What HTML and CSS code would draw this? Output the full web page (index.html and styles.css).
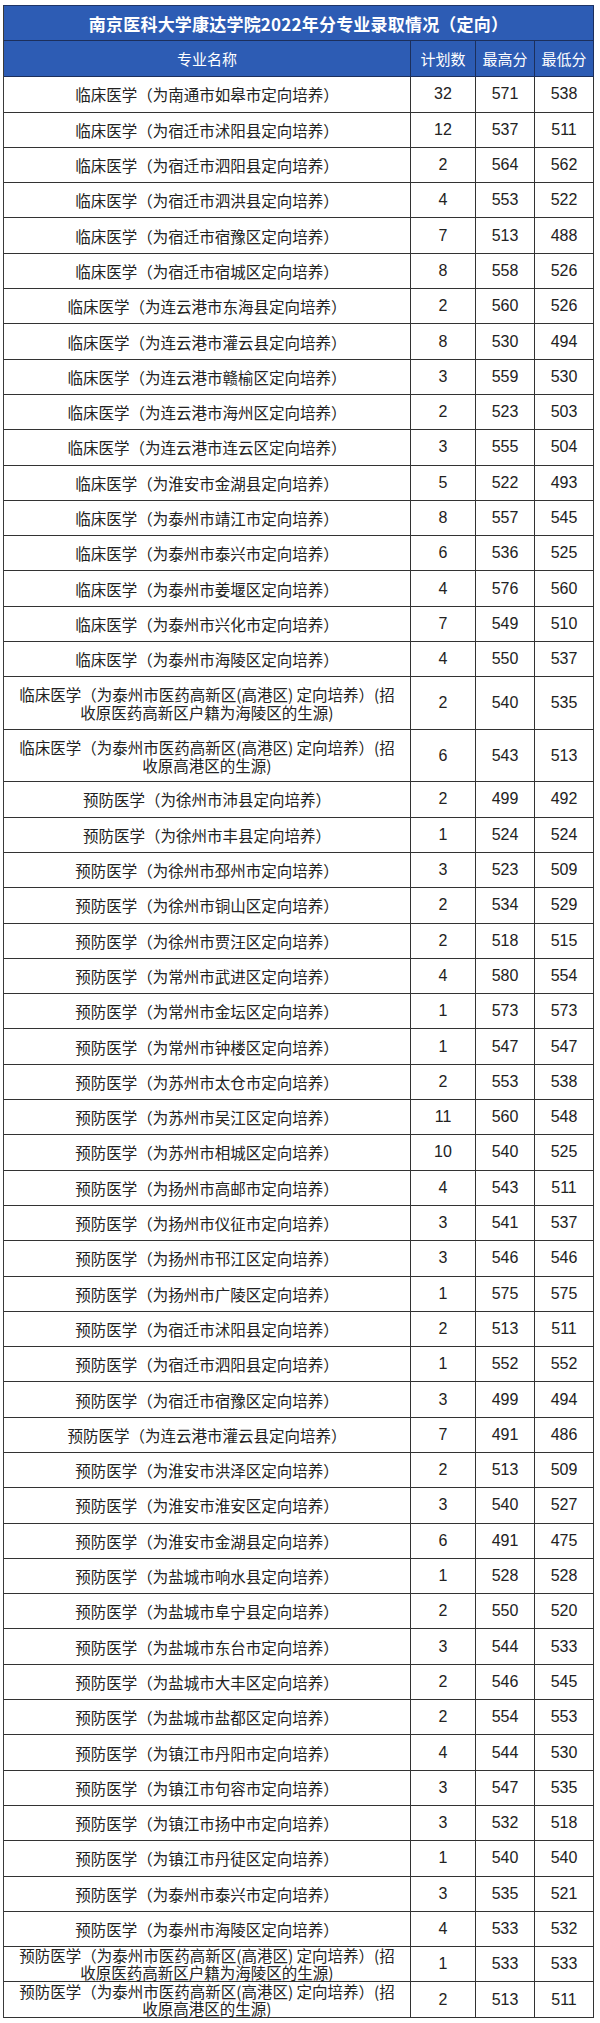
FILE: index.html
```html
<!DOCTYPE html>
<html lang="zh-CN">
<head>
<meta charset="utf-8">
<title>南京医科大学康达学院2022年分专业录取情况（定向）</title>
<link rel="stylesheet" href="styles.css">
</head>
<body>
<div class="sheet">
  <div class="title">南京医科大学康达学院2022年分专业录取情况（定向）</div>
  <div class="hd">专业名称</div><div class="hd">计划数</div><div class="hd">最高分</div><div class="hd">最低分</div>

  <div class="nm">临床医学（为南通市如皋市定向培养）</div><div class="n">32</div><div class="n">571</div><div class="n">538</div>
  <div class="nm">临床医学（为宿迁市沭阳县定向培养）</div><div class="n">12</div><div class="n">537</div><div class="n">511</div>
  <div class="nm">临床医学（为宿迁市泗阳县定向培养）</div><div class="n">2</div><div class="n">564</div><div class="n">562</div>
  <div class="nm">临床医学（为宿迁市泗洪县定向培养）</div><div class="n">4</div><div class="n">553</div><div class="n">522</div>
  <div class="nm">临床医学（为宿迁市宿豫区定向培养）</div><div class="n">7</div><div class="n">513</div><div class="n">488</div>
  <div class="nm">临床医学（为宿迁市宿城区定向培养）</div><div class="n">8</div><div class="n">558</div><div class="n">526</div>
  <div class="nm">临床医学（为连云港市东海县定向培养）</div><div class="n">2</div><div class="n">560</div><div class="n">526</div>
  <div class="nm">临床医学（为连云港市灌云县定向培养）</div><div class="n">8</div><div class="n">530</div><div class="n">494</div>
  <div class="nm">临床医学（为连云港市赣榆区定向培养）</div><div class="n">3</div><div class="n">559</div><div class="n">530</div>
  <div class="nm">临床医学（为连云港市海州区定向培养）</div><div class="n">2</div><div class="n">523</div><div class="n">503</div>
  <div class="nm">临床医学（为连云港市连云区定向培养）</div><div class="n">3</div><div class="n">555</div><div class="n">504</div>
  <div class="nm">临床医学（为淮安市金湖县定向培养）</div><div class="n">5</div><div class="n">522</div><div class="n">493</div>
  <div class="nm">临床医学（为泰州市靖江市定向培养）</div><div class="n">8</div><div class="n">557</div><div class="n">545</div>
  <div class="nm">临床医学（为泰州市泰兴市定向培养）</div><div class="n">6</div><div class="n">536</div><div class="n">525</div>
  <div class="nm">临床医学（为泰州市姜堰区定向培养）</div><div class="n">4</div><div class="n">576</div><div class="n">560</div>
  <div class="nm">临床医学（为泰州市兴化市定向培养）</div><div class="n">7</div><div class="n">549</div><div class="n">510</div>
  <div class="nm">临床医学（为泰州市海陵区定向培养）</div><div class="n">4</div><div class="n">550</div><div class="n">537</div>
  <div class="nm tall">临床医学（为泰州市医药高新区(高港区) 定向培养）(招<br>收原医药高新区户籍为海陵区的生源)</div><div class="n">2</div><div class="n">540</div><div class="n">535</div>
  <div class="nm tall">临床医学（为泰州市医药高新区(高港区) 定向培养）(招<br>收原高港区的生源)</div><div class="n">6</div><div class="n">543</div><div class="n">513</div>

  <div class="nm">预防医学（为徐州市沛县定向培养）</div><div class="n">2</div><div class="n">499</div><div class="n">492</div>
  <div class="nm">预防医学（为徐州市丰县定向培养）</div><div class="n">1</div><div class="n">524</div><div class="n">524</div>
  <div class="nm">预防医学（为徐州市邳州市定向培养）</div><div class="n">3</div><div class="n">523</div><div class="n">509</div>
  <div class="nm">预防医学（为徐州市铜山区定向培养）</div><div class="n">2</div><div class="n">534</div><div class="n">529</div>
  <div class="nm">预防医学（为徐州市贾汪区定向培养）</div><div class="n">2</div><div class="n">518</div><div class="n">515</div>
  <div class="nm">预防医学（为常州市武进区定向培养）</div><div class="n">4</div><div class="n">580</div><div class="n">554</div>
  <div class="nm">预防医学（为常州市金坛区定向培养）</div><div class="n">1</div><div class="n">573</div><div class="n">573</div>
  <div class="nm">预防医学（为常州市钟楼区定向培养）</div><div class="n">1</div><div class="n">547</div><div class="n">547</div>
  <div class="nm">预防医学（为苏州市太仓市定向培养）</div><div class="n">2</div><div class="n">553</div><div class="n">538</div>
  <div class="nm">预防医学（为苏州市吴江区定向培养）</div><div class="n">11</div><div class="n">560</div><div class="n">548</div>
  <div class="nm">预防医学（为苏州市相城区定向培养）</div><div class="n">10</div><div class="n">540</div><div class="n">525</div>
  <div class="nm">预防医学（为扬州市高邮市定向培养）</div><div class="n">4</div><div class="n">543</div><div class="n">511</div>
  <div class="nm">预防医学（为扬州市仪征市定向培养）</div><div class="n">3</div><div class="n">541</div><div class="n">537</div>
  <div class="nm">预防医学（为扬州市邗江区定向培养）</div><div class="n">3</div><div class="n">546</div><div class="n">546</div>
  <div class="nm">预防医学（为扬州市广陵区定向培养）</div><div class="n">1</div><div class="n">575</div><div class="n">575</div>
  <div class="nm">预防医学（为宿迁市沭阳县定向培养）</div><div class="n">2</div><div class="n">513</div><div class="n">511</div>
  <div class="nm">预防医学（为宿迁市泗阳县定向培养）</div><div class="n">1</div><div class="n">552</div><div class="n">552</div>
  <div class="nm">预防医学（为宿迁市宿豫区定向培养）</div><div class="n">3</div><div class="n">499</div><div class="n">494</div>
  <div class="nm">预防医学（为连云港市灌云县定向培养）</div><div class="n">7</div><div class="n">491</div><div class="n">486</div>
  <div class="nm">预防医学（为淮安市洪泽区定向培养）</div><div class="n">2</div><div class="n">513</div><div class="n">509</div>
  <div class="nm">预防医学（为淮安市淮安区定向培养）</div><div class="n">3</div><div class="n">540</div><div class="n">527</div>
  <div class="nm">预防医学（为淮安市金湖县定向培养）</div><div class="n">6</div><div class="n">491</div><div class="n">475</div>
  <div class="nm">预防医学（为盐城市响水县定向培养）</div><div class="n">1</div><div class="n">528</div><div class="n">528</div>
  <div class="nm">预防医学（为盐城市阜宁县定向培养）</div><div class="n">2</div><div class="n">550</div><div class="n">520</div>
  <div class="nm">预防医学（为盐城市东台市定向培养）</div><div class="n">3</div><div class="n">544</div><div class="n">533</div>
  <div class="nm">预防医学（为盐城市大丰区定向培养）</div><div class="n">2</div><div class="n">546</div><div class="n">545</div>
  <div class="nm">预防医学（为盐城市盐都区定向培养）</div><div class="n">2</div><div class="n">554</div><div class="n">553</div>
  <div class="nm">预防医学（为镇江市丹阳市定向培养）</div><div class="n">4</div><div class="n">544</div><div class="n">530</div>
  <div class="nm">预防医学（为镇江市句容市定向培养）</div><div class="n">3</div><div class="n">547</div><div class="n">535</div>
  <div class="nm">预防医学（为镇江市扬中市定向培养）</div><div class="n">3</div><div class="n">532</div><div class="n">518</div>
  <div class="nm">预防医学（为镇江市丹徒区定向培养）</div><div class="n">1</div><div class="n">540</div><div class="n">540</div>
  <div class="nm">预防医学（为泰州市泰兴市定向培养）</div><div class="n">3</div><div class="n">535</div><div class="n">521</div>
  <div class="nm">预防医学（为泰州市海陵区定向培养）</div><div class="n">4</div><div class="n">533</div><div class="n">532</div>
  <div class="nm tight">预防医学（为泰州市医药高新区(高港区) 定向培养）(招<br>收原医药高新区户籍为海陵区的生源)</div><div class="n">1</div><div class="n">533</div><div class="n">533</div>
  <div class="nm tight">预防医学（为泰州市医药高新区(高港区) 定向培养）(招<br>收原高港区的生源)</div><div class="n">2</div><div class="n">513</div><div class="n">511</div>
</div>
</body>
</html>
```

FILE: styles.css
```css
html, body {
  margin: 0;
  padding: 0;
  background: #ffffff;
}

body {
  font-family: "Noto Sans CJK SC", "Liberation Sans", sans-serif;
  color: #222222;
}

.sheet {
  display: grid;
  grid-template-columns: 407px 65px 59px 59px;
  grid-auto-rows: minmax(35.3px, auto);
  width: 591px;
  box-sizing: border-box;
  margin: 5px 0 0 3px;
  border-left: 1px solid #3a3a3a;
  border-top: 1px solid #1f3566;
}

.sheet > div {
  box-sizing: border-box;
  border-right: 1px solid #333333;
  border-bottom: 1px solid #333333;
  display: flex;
  align-items: center;
  justify-content: center;
  text-align: center;
}

.title {
  grid-column: 1 / -1;
  background: #2d5cb4;
  color: #ffffff;
  font-size: 17px;
  font-weight: 700;
  letter-spacing: 0.2px;
  border-color: #1c2f5c !important;
}

.hd {
  height: 36px;
  background: #2d5cb4;
  color: #ffffff;
  font-size: 15px;
  border-color: #1c2f5c !important;
}

.nm {
  font-size: 15.5px;
  line-height: 18px;
  white-space: nowrap;
}

.tall {
  min-height: 52.5px;
}

.tight {
  line-height: 17px;
  overflow: visible;
}

.n {
  font-family: "Liberation Sans Narrow", "Liberation Sans", sans-serif;
  font-size: 16px;
  color: #222222;
}
```
